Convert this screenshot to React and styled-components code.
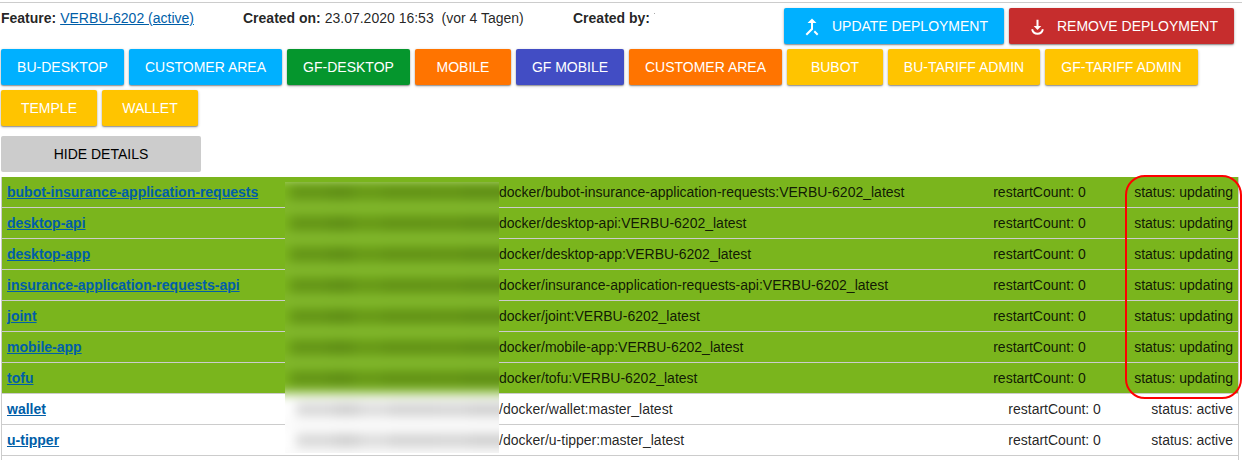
import React from "react";
import styled, { createGlobalStyle } from "styled-components";

const Global = createGlobalStyle`
  * { box-sizing: border-box; }
  body {
    margin: 0;
    height: 460px;
    overflow: hidden;
    background: #fff;
    color: rgba(0, 0, 0, 0.87);
    font: 14px/20px "Liberation Sans", Arial, sans-serif;
  }
`;

const Page = styled.main`
  width: 1242px;
  height: 460px;
  overflow: hidden;
  padding-top: 2px;
`;

const Header = styled.header`
  display: flex;
  height: 47px;
  padding-left: 1px;
  border-top: 1px solid #ccc;
`;

const Fact = styled.div`
  width: ${(p) => p.$width}px;
  padding-top: 5px;
  white-space: pre;
`;

const Speck = styled.i`
  display: inline-block;
  width: 1px;
  height: 1px;
  margin-left: 4px;
  vertical-align: 9px;
  background: #aaa;
`;

const Link = styled.a`
  color: #005ea8;
  text-decoration: underline;
  font-weight: ${(p) => (p.$bold ? 700 : 400)};
`;

const Actions = styled.div`
  display: flex;
  gap: 5px;
  margin-left: auto;
  padding: 5px 8px 0 0;
`;

const Button = styled.button`
  display: inline-flex;
  align-items: center;
  justify-content: center;
  gap: 8px;
  width: ${(p) => p.$width}px;
  height: 36px;
  padding: 0;
  border: 0;
  border-radius: 2px;
  background: ${(p) => p.$color};
  color: ${(p) => (p.$flat ? "#000" : "#fff")};
  font: inherit;
  white-space: nowrap;
  box-shadow: ${(p) => (p.$flat ? "none" : "0 1px 3px rgba(0, 0, 0, 0.3), 0 1px 1px rgba(0, 0, 0, 0.25)")};
`;

const Icon = styled.svg`
  width: 24px;
  height: 24px;
  flex: none;
`;

const Apps = styled.nav`
  display: flex;
  flex-wrap: wrap;
  gap: 5px;
  padding: 0 1px;
`;

const Toggle = styled.div`
  display: flex;
  padding: 10px 1px 5px;
`;

const Table = styled.section`
  position: relative;
  width: 1238px;
  height: 300px;
  margin-left: 1px;
  border: solid #ccc;
  border-width: 0 1px;
`;

const Row = styled.div`
  display: grid;
  grid-template-columns: 492px 494px 1fr auto;
  height: 31px;
  padding: 0 5px;
  line-height: 30px;
  border-bottom: 1px solid #ccc;
  background: ${(p) => (p.$updating ? "#7ab51d" : "#fff")};
`;

const Restarts = styled.span`
  padding-left: ${(p) => (p.$updating ? 0.2 : 15.3)}px;
`;

const Redaction = styled.div`
  position: absolute;
  left: 283px;
  top: 5px;
  width: 214px;
  height: 271px;
  overflow: hidden;
`;

const Haze = styled.div`
  margin: -25px -20px 0;
  padding-top: 20px;
  background: #fff;
  filter: blur(6px);
`;

const HazeRow = styled.div`
  display: flex;
  align-items: center;
  height: 31px;
  padding-left: ${(p) => (p.$updating ? 25 : 31)}px;
  border-bottom: 1px solid #ccc;
  background: ${(p) => (p.$updating ? "#7ab51d" : "#fff")};
`;

const HazeWord = styled.i`
  width: ${(p) => p.$width}px;
  height: 13px;
  flex: none;
  background: rgba(0, 0, 0, ${(p) => p.$alpha});
`;

const Marker = styled.div`
  position: absolute;
  left: 1123px;
  top: -2px;
  width: 117px;
  height: 224px;
  border: 2px solid #f00;
  border-radius: 20px;
`;

const apps = [
  ["BU-DESKTOP", 123, "#00b0ff"],
  ["CUSTOMER AREA", 153, "#00b0ff"],
  ["GF-DESKTOP", 123, "#05962d"],
  ["MOBILE", 96, "#ff7400"],
  ["GF MOBILE", 108, "#424dc4"],
  ["CUSTOMER AREA", 153, "#ff7400"],
  ["BUBOT", 96, "#ffc400"],
  ["BU-TARIFF ADMIN", 152, "#ffc400"],
  ["GF-TARIFF ADMIN", 153, "#ffc400"],
  ["TEMPLE", 96, "#ffc400"],
  ["WALLET", 96, "#ffc400"],
];

const services = [
  ["bubot-insurance-application-requests", true],
  ["desktop-api", true],
  ["desktop-app", true],
  ["insurance-application-requests-api", true],
  ["joint", true],
  ["mobile-app", true],
  ["tofu", true],
  ["wallet", false],
  ["u-tipper", false],
];

const words = [[38, 0.2], [25, 0.24], [30, 0.18], [48, 0.22], [32, 0.21], [60, 0.24]];

export default function App() {
  return (
    <Page>
      <Global />
      <Header>
        <Fact $width={242}><b>Feature:</b> <Link>VERBU-6202 (active)</Link></Fact>
        <Fact $width={330}><b>Created on:</b> 23.07.2020 16:53{"  "}(vor 4 Tagen)</Fact>
        <Fact $width={100}><b>Created by:</b><Speck /></Fact>
        <Actions>
          <Button $width={220} $color="#00b0ff">
            <Icon viewBox="0 -1 24 24" fill="currentColor">
              <path d="M17 20.41 18.41 19 15 15.59 13.59 17 17 20.41zM7.5 8H11v5.59L5.59 19 7 20.41l6-6V8h3.5L12 3.5 7.5 8z" />
            </Icon>
            UPDATE DEPLOYMENT
          </Button>
          <Button $width={225} $color="#c62d2d">
            <Icon viewBox="0 0 24 24" fill="none" stroke="currentColor" strokeWidth="2">
              <path d="M12.5 5.8v7.2M7.1 15.2a5.6 6.1 0 0 0 10.8 0" />
              <path d="M8.7 12h7.6l-3.8 4z" fill="currentColor" stroke="none" />
            </Icon>
            REMOVE DEPLOYMENT
          </Button>
        </Actions>
      </Header>
      <Apps>
        {apps.map(([name, width, color], i) => (
          <Button key={i} $width={width} $color={color}>{name}</Button>
        ))}
      </Apps>
      <Toggle><Button $width={200} $color="#ccc" $flat>HIDE DETAILS</Button></Toggle>
      <Table>
        {services.map(([name, updating]) => (
          <Row key={name} $updating={updating}>
            <Link $bold>{name}</Link>
            <span>{updating ? `docker/${name}:VERBU-6202_latest` : `/docker/${name}:master_latest`}</span>
            <Restarts $updating={updating}>restartCount: 0</Restarts>
            <span>status: {updating ? "updating" : "active"}</span>
          </Row>
        ))}
        <Redaction>
          <Haze>
            {services.map(([name, updating]) => (
              <HazeRow key={name} $updating={updating}>
                {words.map(([w, a], i) => <HazeWord key={i} $width={w} $alpha={updating ? a : a * 0.85} />)}
              </HazeRow>
            ))}
          </Haze>
        </Redaction>
        <Marker />
      </Table>
    </Page>
  );
}
